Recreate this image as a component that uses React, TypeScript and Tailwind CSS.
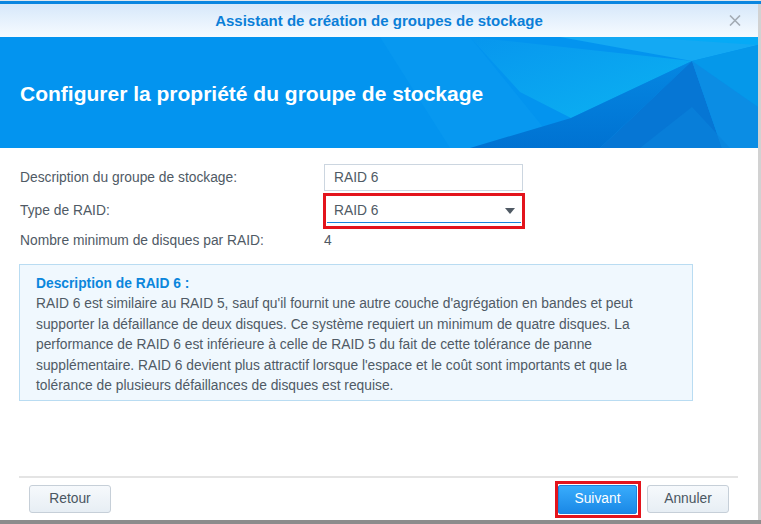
import React from "react";

const font = { fontFamily: '"Liberation Sans", Arial, sans-serif' };

function Banner() {
  return (
    <div className="relative h-[111px] bg-[#0394ef] overflow-hidden">
      <svg className="absolute inset-0" width="758" height="111" viewBox="0 0 758 111">
        <defs>
          <linearGradient id="g1" x1="0" y1="0" x2="1" y2="1">
            <stop offset="0" stopColor="#0796ee" />
            <stop offset="1" stopColor="#0cb3f2" />
          </linearGradient>
          <linearGradient id="g2" x1="0" y1="0" x2="0" y2="1">
            <stop offset="0" stopColor="#0587e2" />
            <stop offset="1" stopColor="#0072d2" />
          </linearGradient>
        </defs>
        <polygon points="380,0 470,0 560,111 450,111" fill="#0798f0" />
        <polygon points="470,0 692,24 571,81 520,55" fill="url(#g1)" />
        <polygon points="560,0 758,0 758,8 692,24" fill="#14a9f3" />
        <polygon points="640,0 758,0 758,8" fill="#06aaf6" />
        <polygon points="692,24 758,8 758,70" fill="#0598ea" />
        <polygon points="571,81 692,24 600,111 470,111" fill="url(#g2)" />
        <polygon points="692,24 722,111 600,111" fill="#0676d4" />
        <polygon points="692,24 758,70 758,111 722,111" fill="#0b8de4" />
        <polygon points="640,111 692,70 730,111" fill="#0a84dc" opacity="0.6" />
      </svg>
      <div
        className="relative h-full flex items-center pl-[20px] pt-[3px] text-white font-bold text-[21px]"
        style={font}
      >
        Configurer la propriété du groupe de stockage
      </div>
    </div>
  );
}

export default function App() {
  return (
    <div className="w-[761px] h-[524px] bg-[#8e8e8e] flex flex-col overflow-hidden" style={font}>
      <div className="h-[1px] bg-[#dfe6ec]" />
      <div className="h-[3px] bg-[#0a86e0]" />
      <div className="flex h-[516px]">
        <div className="w-[758px] h-full bg-white flex flex-col">
          <div className="h-[33px] bg-gradient-to-b from-[#d6e8fa] to-[#f7fbff] relative flex items-center justify-center">
            <span className="text-[15px] font-bold text-[#0b7fd8] pt-[1px]">
              Assistant de création de groupes de stockage
            </span>
            <svg className="absolute left-[729px] top-[11px]" width="12" height="11" viewBox="0 0 12 11">
              <path d="M1 0.5 L11 10.5 M11 0.5 L1 10.5" stroke="#a4acb4" strokeWidth="1.6" />
            </svg>
          </div>
          <Banner />
          <div className="flex-1 flex flex-col pt-[16px] text-[13.8px] text-[#4f5a65]">
            <div className="flex items-center h-[27px]">
              <div className="w-[324px] pl-[20px] pt-[2px]">Description du groupe de stockage:</div>
              <div className="w-[199px] h-[27px] border border-[#ccd6e0] flex items-center pl-[9px] pt-[1px]">
                RAID 6
              </div>
            </div>
            <div className="flex items-center h-[36px] mt-[2px]">
              <div className="w-[323px] pl-[20px]">Type de RAID:</div>
              <div className="w-[202px] h-[36px] border-[3px] border-[#e3141c] relative flex items-center pl-[8px]">
                <span>RAID 6</span>
                <svg className="absolute right-[7px] top-[12px]" width="10" height="6" viewBox="0 0 10 6">
                  <polygon points="0,0 10,0 5,6" fill="#505a64" />
                </svg>
                <div className="absolute left-[1px] right-[1px] bottom-[3px] h-[1px] bg-[#1a85dc]" />
              </div>
            </div>
            <div className="flex items-center h-[24px]">
              <div className="w-[324px] pl-[20px]">Nombre minimum de disques par RAID:</div>
              <div>4</div>
            </div>
            <div className="ml-[19px] mt-[11px] w-[674px] h-[137px] border border-[#b9dcf2] bg-[#f0f8fe] pl-[16px] pt-[9px]">
              <div className="leading-[20px] font-bold text-[#0b86dc]">Description de RAID 6 :</div>
              <div className="leading-[20.5px] whitespace-nowrap">
                RAID 6 est similaire au RAID 5, sauf qu'il fournit une autre couche d'agrégation en bandes et peut
                <br />
                supporter la défaillance de deux disques. Ce système requiert un minimum de quatre disques. La
                <br />
                performance de RAID 6 est inférieure à celle de RAID 5 du fait de cette tolérance de panne
                <br />
                supplémentaire. RAID 6 devient plus attractif lorsque l'espace et le coût sont importants et que la
                <br />
                tolérance de plusieurs défaillances de disques est requise.
              </div>
            </div>
          </div>
          <div className="h-[44px] flex flex-col">
            <div className="ml-[19px] w-[719px] h-[2px] bg-[#e4e4e4]" />
            <div className="flex items-start pt-[5px] text-[13.8px]">
              <button className="ml-[29px] mt-[2px] w-[82px] h-[28px] rounded-[3px] border border-[#c6cfd8] bg-gradient-to-b from-[#f6f9fc] to-[#e7eef4] text-[#4a5661]">
                Retour
              </button>
              <div className="ml-auto -mt-[2px] w-[86px] h-[37px] border-[3px] border-[#e3141c] flex items-start pt-[1px]">
                <button className="w-[79px] h-[29px] rounded-[2px] border border-[#1b82dc] bg-gradient-to-b from-[#38acfc] to-[#1a88e6] text-white">
                  Suivant
                </button>
              </div>
              <button className="ml-[6px] mr-[29px] mt-[2px] w-[82px] h-[28px] rounded-[3px] border border-[#c6cfd8] bg-gradient-to-b from-[#f6f9fc] to-[#e7eef4] text-[#4a5661]">
                Annuler
              </button>
            </div>
          </div>
        </div>
        <div className="w-[3px] bg-[#d2d2d2]" />
      </div>
      <div className="flex-1 bg-[#8c8c8c]" />
    </div>
  );
}
